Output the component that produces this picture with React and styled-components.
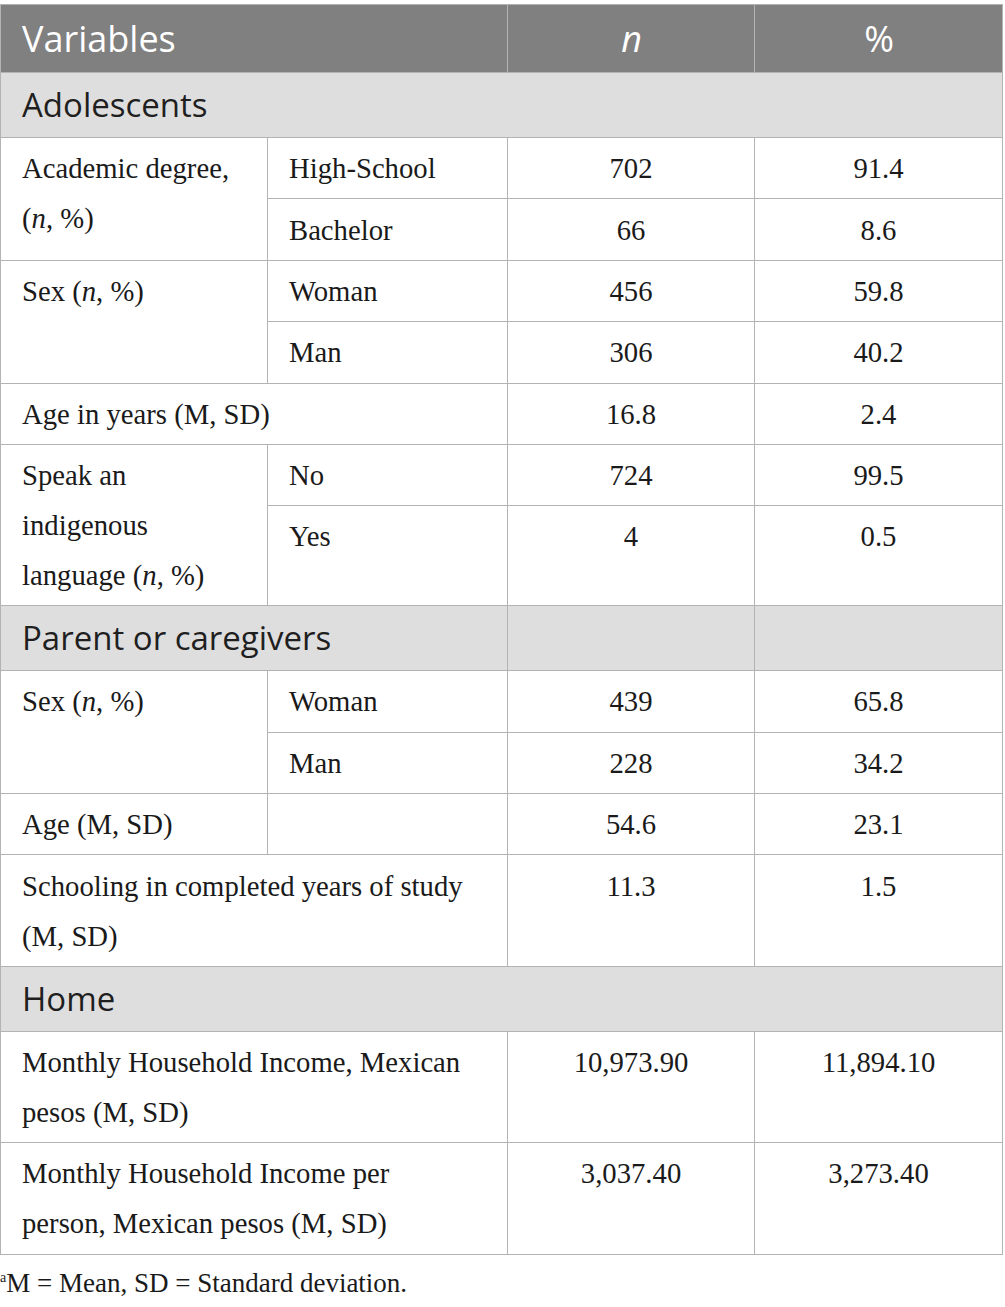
import React from 'react';
import styled, { createGlobalStyle } from 'styled-components';

const GlobalStyle = createGlobalStyle`
    html, body {
        margin: 0;
        padding: 0;
        background: #fff;
    }
`;

const Page = styled.div`
    padding-top: 4px;
    width: 1002px;
    font-family: "Liberation Serif", "Times New Roman", serif;
    color: #1a1a1a;
`;

const Table = styled.table`
    width: 1002px;
    border-collapse: collapse;
    table-layout: fixed;
`;

const Row = styled.tr`
    height: ${(p) => (p.$h ? `${p.$h}px` : 'auto')};
`;

const HeadCell = styled.th`
    background: #7f807f;
    color: #fff;
    font-family: "Open Sans", "Noto Sans", sans-serif;
    font-weight: 400;
    font-size: 36px;
    line-height: 58px;
    padding: 5px 20px 4px 21px;
    border: 1px solid #b3b3b3;
    text-align: ${(p) => (p.$center ? 'center' : 'left')};
    font-style: ${(p) => (p.$italic ? 'italic' : 'normal')};
`;

const SectionCell = styled.td`
    background: #dfdedf;
    color: #1f1f1f;
    font-family: "Open Sans", "Noto Sans", sans-serif;
    font-size: 33px;
    line-height: 54px;
    padding: 5px 20px 5px 21px;
    border: 1px solid #b3b3b3;
`;

const Cell = styled.td`
    font-size: 28.7px;
    line-height: 50px;
    padding: ${(p) => (p.$center ? '5.2px 10px' : '5.2px 30px 5.2px 21px')};
    border: 1px solid #b3b3b3;
    vertical-align: top;
    text-align: ${(p) => (p.$center ? 'center' : 'left')};
`;

const Footnote = styled.div`
    font-size: 27px;
    line-height: 50px;
    margin-top: 3px;

    sup {
        font-size: 14px;
        vertical-align: 10px;
        line-height: 0;
    }
`;

const N = () => <i>n</i>;

const App = () => {
    return (
        <Page>
            <GlobalStyle />
            <Table>
                <colgroup>
                    <col style={{ width: 267 }} />
                    <col style={{ width: 240 }} />
                    <col style={{ width: 247 }} />
                    <col style={{ width: 248 }} />
                </colgroup>
                <thead>
                    <tr>
                        <HeadCell colSpan={2}>Variables</HeadCell>
                        <HeadCell $center $italic>n</HeadCell>
                        <HeadCell $center>%</HeadCell>
                    </tr>
                </thead>
                <tbody>
                    <tr>
                        <SectionCell colSpan={4}>Adolescents</SectionCell>
                    </tr>
                    <tr>
                        <Cell rowSpan={2}>Academic degree, (<N />, %)</Cell>
                        <Cell>High-School</Cell>
                        <Cell $center>702</Cell>
                        <Cell $center>91.4</Cell>
                    </tr>
                    <tr>
                        <Cell>Bachelor</Cell>
                        <Cell $center>66</Cell>
                        <Cell $center>8.6</Cell>
                    </tr>
                    <tr>
                        <Cell rowSpan={2}>Sex (<N />, %)</Cell>
                        <Cell>Woman</Cell>
                        <Cell $center>456</Cell>
                        <Cell $center>59.8</Cell>
                    </tr>
                    <tr>
                        <Cell>Man</Cell>
                        <Cell $center>306</Cell>
                        <Cell $center>40.2</Cell>
                    </tr>
                    <tr>
                        <Cell colSpan={2}>Age in years (M, SD)</Cell>
                        <Cell $center>16.8</Cell>
                        <Cell $center>2.4</Cell>
                    </tr>
                    <Row $h={61}>
                        <Cell rowSpan={2}>Speak an indigenous language (<N />, %)</Cell>
                        <Cell>No</Cell>
                        <Cell $center>724</Cell>
                        <Cell $center>99.5</Cell>
                    </Row>
                    <Row $h={100}>
                        <Cell>Yes</Cell>
                        <Cell $center>4</Cell>
                        <Cell $center>0.5</Cell>
                    </Row>
                    <tr>
                        <SectionCell colSpan={2}>Parent or caregivers</SectionCell>
                        <SectionCell />
                        <SectionCell />
                    </tr>
                    <tr>
                        <Cell rowSpan={2}>Sex (<N />, %)</Cell>
                        <Cell>Woman</Cell>
                        <Cell $center>439</Cell>
                        <Cell $center>65.8</Cell>
                    </tr>
                    <tr>
                        <Cell>Man</Cell>
                        <Cell $center>228</Cell>
                        <Cell $center>34.2</Cell>
                    </tr>
                    <tr>
                        <Cell>Age (M, SD)</Cell>
                        <Cell />
                        <Cell $center>54.6</Cell>
                        <Cell $center>23.1</Cell>
                    </tr>
                    <tr>
                        <Cell colSpan={2}>Schooling in completed years of study (M, SD)</Cell>
                        <Cell $center>11.3</Cell>
                        <Cell $center>1.5</Cell>
                    </tr>
                    <tr>
                        <SectionCell colSpan={4}>Home</SectionCell>
                    </tr>
                    <tr>
                        <Cell colSpan={2}>Monthly Household Income, Mexican pesos (M, SD)</Cell>
                        <Cell $center>10,973.90</Cell>
                        <Cell $center>11,894.10</Cell>
                    </tr>
                    <tr>
                        <Cell colSpan={2}>Monthly Household Income per person, Mexican pesos (M, SD)</Cell>
                        <Cell $center>3,037.40</Cell>
                        <Cell $center>3,273.40</Cell>
                    </tr>
                </tbody>
            </Table>
            <Footnote><sup>a</sup>M = Mean, SD = Standard deviation.</Footnote>
        </Page>
    );
};

export default App;
